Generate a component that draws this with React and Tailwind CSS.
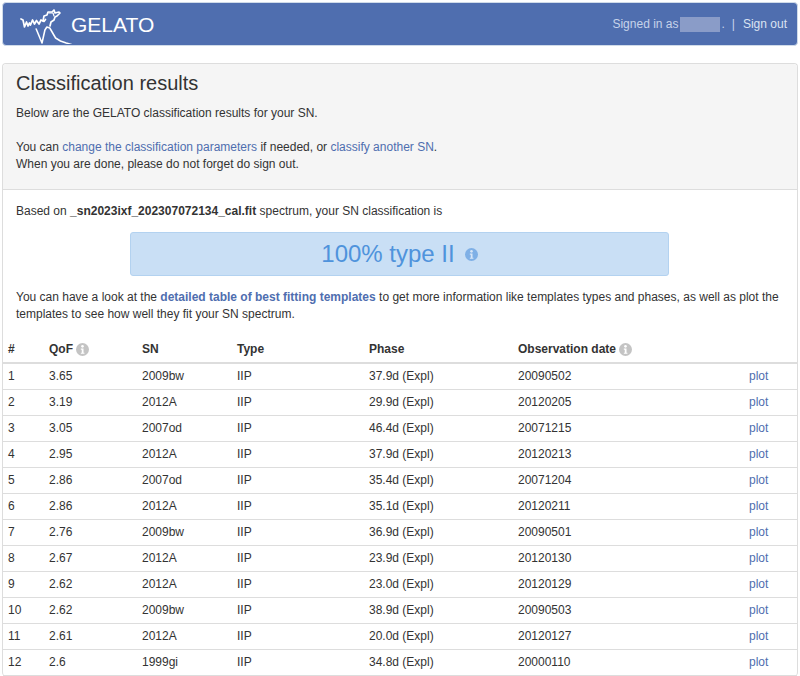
const rows = [
  ["1","3.65","2009bw","37.9d (Expl)","20090502"],
  ["2","3.19","2012A","29.9d (Expl)","20120205"],
  ["3","3.05","2007od","46.4d (Expl)","20071215"],
  ["4","2.95","2012A","37.9d (Expl)","20120213"],
  ["5","2.86","2007od","35.4d (Expl)","20071204"],
  ["6","2.86","2012A","35.1d (Expl)","20120211"],
  ["7","2.76","2009bw","36.9d (Expl)","20090501"],
  ["8","2.67","2012A","23.9d (Expl)","20120130"],
  ["9","2.62","2012A","23.0d (Expl)","20120129"],
  ["10","2.62","2009bw","38.9d (Expl)","20090503"],
  ["11","2.61","2012A","20.0d (Expl)","20120127"],
  ["12","2.6","1999gi","34.8d (Expl)","20000110"],
];

function Info({ size = 13, color = "#c4c4c4", dot = "#ffffff" }) {
  return (
    <svg width={size} height={size} viewBox="0 0 14 14" className="inline-block shrink-0">
      <circle cx="7" cy="7" r="7" fill={color} />
      <circle cx="7" cy="3.6" r="1.4" fill={dot} />
      <path d="M5.2 6h2.9v4.4h1v1.2H5.2v-1.2h1V7.2h-1z" fill={dot} />
    </svg>
  );
}

function Logo() {
  return (
    <svg width="62" height="40" viewBox="0 0 62 40" fill="none" stroke="#fff" strokeWidth="1.7" strokeLinejoin="round" strokeLinecap="round">
      <path d="M10 15l2 1 1.5 7 2-5 1.500 4 1.500-3 1 2 2-5 2 4 2-3.500 2.500 3.500 2-4 3 1.500 1.500-2" />
      <path d="M32 17l1-5 3-1 1-3 4 0 2-2 1 3 4-1 1 1-3 3-2 1-1 3-3 2-1 4" />
      <path d="M38 9l4 0 1 3" strokeWidth="1.2" />
      <path d="M27 25l6 14 3-13 2-3 3 1 3 5 3 5 5 3 6 2 7 2" strokeWidth="1.6" transform="translate(-1,0) scale(0.97,1)" />
    </svg>
  );
}

const th = "py-[4px] pl-[5px] pr-0 text-left font-bold border-b-2 border-[#dddddd] h-[27px] align-bottom";
const td = "py-[4px] pl-[5px] pr-0 border-b border-[#dddddd] h-[26px] align-top";

export default function App() {
  return (
    <div className="w-[800px] h-[676px] overflow-hidden bg-white text-[12px] leading-[17px] text-[#333333] font-['Liberation_Sans',Arial,sans-serif] px-[2px] pt-[2px]">
      <header className="h-[44px] w-[796px] bg-[#4f6eaf] border border-[#d0dbe9] rounded-[4px] flex items-center justify-between pl-[8px] pr-[10px]">
        <div className="flex items-center gap-[2px]">
          <Logo />
          <span className="text-white text-[21px] leading-none ml-[-4px]">GELATO</span>
        </div>
        <div className="flex items-center text-[#c7d3ea]">
          <span>Signed in as</span>
          <span className="ml-[2px] w-[40px] h-[15px] bg-[#8a9cc8]" />
          <span className="ml-[1px]">.</span>
          <span className="ml-[7px] mr-[8px]">|</span>
          <a className="text-[#dbe3f2]">Sign out</a>
        </div>
      </header>

      <main className="mt-[17px] w-[796px] border border-[#dddddd] rounded-[4px] border-b-0">
        <section className="bg-[#f5f5f5] border-b border-[#dddddd] h-[126px] px-[13px] pt-[8px] rounded-t-[4px]">
          <h1 className="text-[20px] leading-[22px] font-normal mb-[11px]">Classification results</h1>
          <p>Below are the GELATO classification results for your SN.</p>
          <p className="mt-[17px]">
            You can <a className="text-[#4f6eaf]">change the classification parameters</a> if needed, or <a className="text-[#4f6eaf]">classify another SN</a>.
          </p>
          <p>When you are done, please do not forget do sign out.</p>
        </section>

        <section className="px-[13px] pt-[13px]">
          <p>Based on <b>_sn2023ixf_202307072134_cal.fit</b> spectrum, your SN classification is</p>
          <div className="mx-auto mt-[12px] w-[539px] h-[44px] ml-[114px] bg-[#c9dff5] border border-[#b3d2f0] rounded-[3px] flex items-center justify-center gap-[10px] text-[#4f93dc] text-[24px] leading-none">
            <span>100% type II</span>
            <Info size={13} color="#7fb0e6" dot="#d7e6f7" />
          </div>
          <p className="mt-[13px]">
            You can have a look at the <a className="text-[#4f6eaf] font-bold">detailed table of best fitting templates</a> to get more information like templates types and phases, as well as plot the templates to see how well they fit your SN spectrum.
          </p>
        </section>

        <table className="w-full mt-[13px] border-collapse table-fixed">
          <colgroup>
            <col className="w-[41px]" />
            <col className="w-[93px]" />
            <col className="w-[95px]" />
            <col className="w-[132px]" />
            <col className="w-[149px]" />
            <col className="w-[231px]" />
            <col />
          </colgroup>
          <thead>
            <tr>
              <th className={th}>#</th>
              <th className={th}><span className="inline-flex items-center gap-[3px]">QoF <Info /></span></th>
              <th className={th}>SN</th>
              <th className={th}>Type</th>
              <th className={th}>Phase</th>
              <th className={th}><span className="inline-flex items-center gap-[3px]">Observation date <Info /></span></th>
              <th className={th}></th>
            </tr>
          </thead>
          <tbody>
            {rows.map((r) => (
              <tr key={r[0]}>
                <td className={td}>{r[0]}</td>
                <td className={td}>{r[1]}</td>
                <td className={td}>{r[2]}</td>
                <td className={td}>IIP</td>
                <td className={td}>{r[3]}</td>
                <td className={td}>{r[4]}</td>
                <td className={td}><a className="text-[#4f6eaf]">plot</a></td>
              </tr>
            ))}
          </tbody>
        </table>
      </main>
    </div>
  );
}
